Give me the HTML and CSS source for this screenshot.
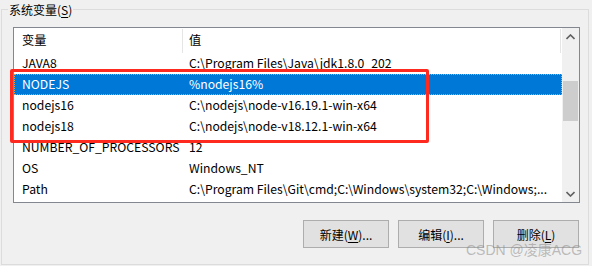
FILE: index.html
```html
<!DOCTYPE html>
<html lang="zh-CN">
<head>
<meta charset="utf-8">
<title>系统变量</title>
<link rel="stylesheet" href="styles.css">
</head>
<body>
<div class="group">
  <div class="legend">系统变量(<u>S</u>)</div>
  <div class="listbox">
    <div class="content">
      <div class="header">
        <div class="hcell first">变量</div>
        <div class="hcell second">值</div>
      </div>
      <div class="row"><div class="c1">JAVA8</div><div class="c2">C:\Program Files\Java\jdk1.8.0_202</div></div>
      <div class="row selected"><div class="c1">NODEJS</div><div class="c2">%nodejs16%</div></div>
      <div class="row"><div class="c1">nodejs16</div><div class="c2">C:\nodejs\node-v16.19.1-win-x64</div></div>
      <div class="row"><div class="c1">nodejs18</div><div class="c2">C:\nodejs\node-v18.12.1-win-x64</div></div>
      <div class="row"><div class="c1">NUMBER_OF_PROCESSORS</div><div class="c2">12</div></div>
      <div class="row"><div class="c1">OS</div><div class="c2">Windows_NT</div></div>
      <div class="row"><div class="c1">Path</div><div class="c2">C:\Program Files\Git\cmd;C:\Windows\system32;C:\Windows;...</div></div>
    </div>
    <div class="scrollbar">
      <div class="sbtn">
        <svg width="9" height="6" viewBox="0 0 9 6"><path d="M0.5 5 L4.5 1 L8.5 5" fill="none" stroke="#606060" stroke-width="1.6"/></svg>
      </div>
      <div class="track"><div class="thumb"></div></div>
      <div class="sbtn">
        <svg width="9" height="6" viewBox="0 0 9 6"><path d="M0.5 1 L4.5 5 L8.5 1" fill="none" stroke="#606060" stroke-width="1.6"/></svg>
      </div>
    </div>
  </div>
  <div class="buttons">
    <button class="btn">新建(<u>W</u>)...</button>
    <button class="btn">编辑(<u>I</u>)...</button>
    <button class="btn">删除(<u>L</u>)</button>
  </div>
</div>
<div class="highlight"></div>
<div class="watermark">CSDN @凌康ACG</div>
</body>
</html>
```
FILE: styles.css
```css
html, body {
  margin: 0;
  padding: 0;
}
body {
  width: 592px;
  height: 266px;
  background: #f0f0f0;
  font-family: "Noto Sans CJK SC", "Noto Sans", sans-serif;
  font-size: 12px;
  color: #000;
  position: relative;
  overflow: hidden;
}
.group {
  box-sizing: border-box;
  margin: 9px 3px 0 1px;
  width: 588px;
  height: 256px;
  border: 1px solid #dcdcdc;
}
.legend {
  width: max-content;
  margin: -8px 0 0 6px;
  padding: 0 1px;
  line-height: 16px;
  height: 16px;
  background: #f0f0f0;
}
.legend u, .btn u {
  text-decoration-thickness: 1px;
  text-underline-offset: 2px;
}
.listbox {
  box-sizing: border-box;
  margin: 9px 0 0 11px;
  width: 567px;
  height: 176px;
  border: 1px solid #828790;
  background: #fff;
  display: flex;
}
.content {
  flex: 1;
  min-width: 0;
  font-size: 12.2px;
}
.header {
  display: flex;
  height: 25px;
  line-height: 25px;
}
.hcell {
  box-sizing: border-box;
  border-right: 1px solid #e5e5e5;
  margin-top: 1px;
  line-height: 23px;
}
.hcell.first {
  width: 169px;
  padding-left: 8px;
}
.hcell.second {
  flex: 1;
  padding-left: 6px;
  margin-right: 1px;
}
.row {
  display: grid;
  grid-template-columns: 175px 1fr;
  height: 21px;
  line-height: 21px;
  white-space: nowrap;
}
.row .c1 {
  padding-left: 8px;
}
.row.selected {
  box-sizing: border-box;
  background: #0078d7;
  color: #fff;
  border: 1px dotted #f0a040;
  line-height: 19px;
}
.row.selected .c1 {
  padding-left: 7px;
}
.row.selected .c2 {
  margin-left: -1px;
}
.scrollbar {
  width: 17px;
  background: #f0f0f0;
  display: flex;
  flex-direction: column;
}
.sbtn {
  height: 17px;
  display: flex;
  align-items: center;
  justify-content: center;
}
.track {
  flex: 1;
}
.thumb {
  margin: 36px 1px 0 1px;
  height: 40px;
  background: #cdcdcd;
}
.buttons {
  display: flex;
  justify-content: flex-end;
  gap: 9px;
  margin-top: 17px;
  padding-right: 9px;
}
.btn {
  box-sizing: border-box;
  width: 86px;
  height: 28px;
  margin: 0;
  padding: 0;
  border: 1px solid #adadad;
  background: #e1e1e1;
  font-family: "Noto Sans CJK SC", "Noto Sans", sans-serif;
  font-size: 12px;
  color: #000;
}
.highlight {
  position: absolute;
  left: 10px;
  top: 69px;
  width: 419px;
  height: 74px;
  box-sizing: border-box;
  border: 3px solid #ff2a1f;
  border-radius: 2px;
}
.watermark {
  position: absolute;
  left: 466px;
  top: 242px;
  font-family: "Liberation Sans", "Noto Sans CJK SC", sans-serif;
  font-size: 14px;
  line-height: 16px;
  color: rgba(140, 140, 140, 0.55);
  white-space: nowrap;
}
```
